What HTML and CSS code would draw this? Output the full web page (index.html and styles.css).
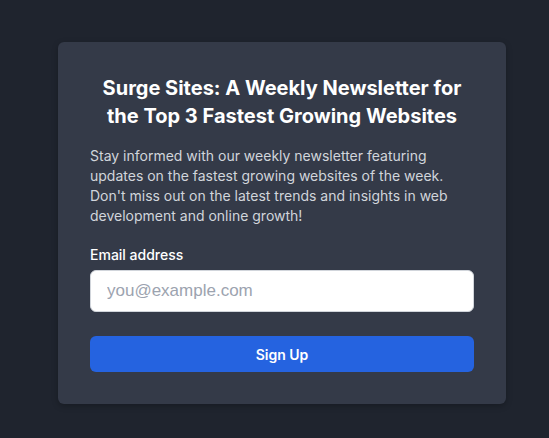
FILE: index.html
```html
<!DOCTYPE html>
<html lang="en">
<head>
<meta charset="utf-8">
<title>Surge Sites Newsletter</title>
<link rel="stylesheet" href="styles.css">
</head>
<body>
<main class="page">
  <section class="card">
    <h1 class="title">Surge Sites: A Weekly Newsletter for the Top 3 Fastest Growing Websites</h1>
    <p class="intro">Stay informed with our weekly newsletter featuring updates on the fastest growing websites of the week. Don't miss out on the latest trends and insights in web development and online growth!</p>
    <form class="form">
      <label class="label" for="email">Email address</label>
      <input class="input" id="email" type="email" placeholder="you@example.com">
      <button class="button" type="button">Sign Up</button>
    </form>
  </section>
</main>
</body>
</html>
```

FILE: styles.css
```css
* { box-sizing: border-box; }
html, body {
  margin: 0;
  padding: 0;
  background: #1f242e;
  font-family: Inter, "Noto Sans", sans-serif;
}
.page {
  min-height: 438px;
  padding: 42px 0 0 58px;
}
.card {
  width: 448px;
  background: #343a48;
  border-radius: 6px;
  padding: 32px;
  box-shadow: 0 2px 6px rgba(0, 0, 0, 0.25);
}
.title {
  margin: 0 0 16px;
  font-size: 20px;
  line-height: 28px;
  font-weight: 700;
  color: #ffffff;
  text-align: center;
}
.intro {
  margin: 0 0 19px;
  font-size: 14px;
  line-height: 20px;
  color: #d1d5db;
}
.form {
  display: flex;
  flex-direction: column;
}
.label {
  font-size: 14px;
  line-height: 20px;
  font-weight: 500;
  color: #ffffff;
}
.input {
  margin-top: 5px;
  height: 42px;
  width: 100%;
  border: 1px solid #d1d5db;
  border-radius: 6px;
  background: #ffffff;
  padding: 0 16px;
  font-family: "Liberation Sans", Arial, sans-serif;
  font-size: 17px;
  color: #111827;
}
.input::placeholder { color: #9ca3af; }
.button {
  margin-top: 24px;
  height: 36px;
  width: 100%;
  border: none;
  border-radius: 6px;
  background: #2563e0;
  color: #ffffff;
  font-family: Inter, "Noto Sans", sans-serif;
  font-size: 14px;
  font-weight: 600;
}
```
